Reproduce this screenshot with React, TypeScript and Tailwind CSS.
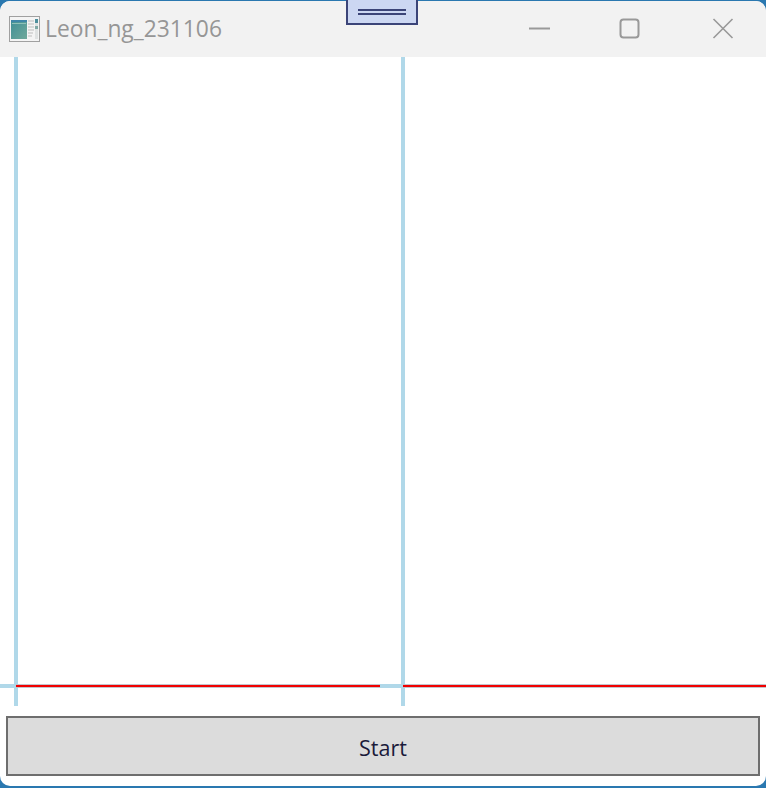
const AppIcon = () => (
  <svg width="32" height="26" viewBox="0 0 32 26" className="shrink-0">
    <defs>
      <linearGradient id="pane" x1="0" y1="0" x2="1" y2="1">
        <stop offset="0" stopColor="#3f8f96" />
        <stop offset="1" stopColor="#6fa89a" />
      </linearGradient>
    </defs>
    <rect x="0.5" y="0.5" width="30" height="25" fill="#f4f4f4" stroke="#a0a0a0" />
    <rect x="2" y="4" width="16" height="19" fill="url(#pane)" />
    <rect x="2" y="4" width="16" height="2" fill="#3f86a8" />
    <rect x="3" y="7" width="14" height="1" fill="#8fc0b8" />
    <path d="M19 5h6M19 8h6M19 11h6M19 14h6M19 17h5M19 20h4" stroke="#bdbdbd" strokeWidth="1" />
    <rect x="26" y="3" width="3" height="20" fill="#dfe2e2" />
    <rect x="26" y="3" width="3" height="4" fill="#4d8f9c" />
    <rect x="26" y="10" width="3" height="3" fill="#7fa9a5" />
  </svg>
);

const WindowButtons = () => (
  <div className="flex items-center">
    <svg width="22" height="22" viewBox="0 0 22 22" className="mr-[68px]">
      <path d="M0 10.5h21" stroke="#999999" strokeWidth="2" />
    </svg>
    <svg width="22" height="22" viewBox="0 0 22 22" className="mr-[71px]">
      <rect x="1.5" y="1.5" width="18" height="18" rx="3" fill="none" stroke="#999999" strokeWidth="2" />
    </svg>
    <svg width="22" height="22" viewBox="0 0 22 22" className="mr-[32px]">
      <path d="M1.5 1l19 19M20.5 1l-19 19" stroke="#999999" strokeWidth="1.6" />
    </svg>
  </div>
);

export default function App() {
  return (
    <div className="h-[788px] w-[766px] bg-[#2a78b0] pb-[2px] pt-px font-['Open_Sans',sans-serif]">
      <div className="relative flex h-full flex-col overflow-hidden rounded-[10px] bg-white">
        <div className="relative flex h-[56px] shrink-0 items-center justify-between bg-[#f2f2f2] pl-[9px]">
          <div className="flex items-center gap-[4px]">
            <AppIcon />
            <span className="text-[22.8px] leading-none text-[#969696]">Leon_ng_231106</span>
          </div>
          <WindowButtons />
        </div>

        <div className="relative flex h-[649px] shrink-0 pl-[14px]">
          <div className="h-full w-[387px] border-l-4 border-[#b0d8e9]" />
          <div className="h-full flex-1 border-l-4 border-[#b0d8e9]" />
          <div className="absolute left-0 top-[627px] flex h-1 w-full">
            <div className="w-4 bg-[#b0d8e9]" />
            <div className="h-1 w-[364px] border-y border-y-[#c4c4cc] bg-[#f00000]" />
            <div className="w-[23px] bg-[#b0d8e9]" />
            <div className="h-1 flex-1 border-y border-y-[#c4c4cc] bg-[#f00000]" />
          </div>
        </div>

        <div className="flex flex-1 items-start px-[6px] pt-[10px]">
          <button className="flex h-[60px] w-[754px] items-center justify-center border-2 border-[#6e6e6e] bg-[#dcdcdc] pt-[4px] text-[21.5px] leading-none text-[#1a1a3a]">
            Start
          </button>
        </div>
      </div>

      <div className="absolute left-[346px] top-0 flex h-[25px] w-[72px] flex-col items-center justify-center gap-[2px] border-2 border-t-0 border-[#3b4478] bg-[#ccd7f2]">
        <div className="h-[2px] w-[48px] bg-[#3b4478]" />
        <div className="h-[2px] w-[48px] bg-[#3b4478]" />
      </div>
    </div>
  );
}
